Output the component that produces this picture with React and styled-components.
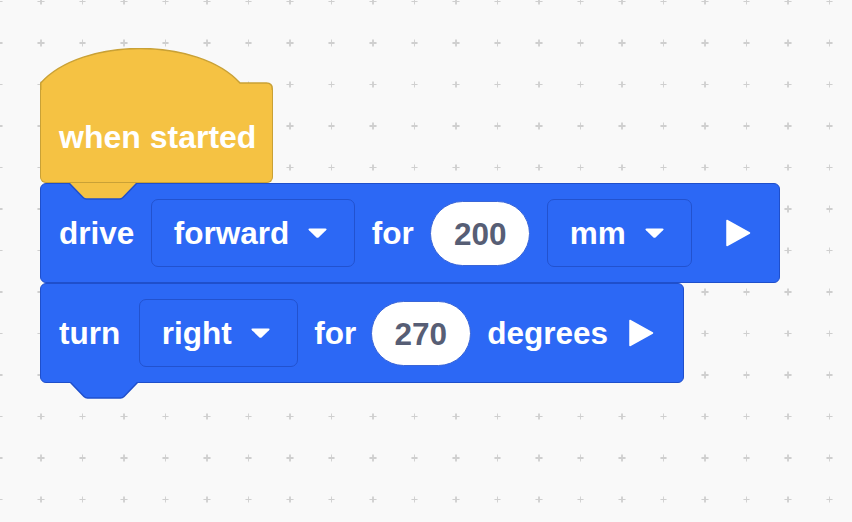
import styled, { createGlobalStyle } from 'styled-components';

const plus =
  "url(\"data:image/svg+xml,%3Csvg xmlns='http://www.w3.org/2000/svg' width='41.5' height='41.5'%3E%3Cpath d='M20.75 17.25v7M17.25 20.75h7' stroke='%23cfcfcf' stroke-width='1.8'/%3E%3C/svg%3E\")";

const GlobalStyle = createGlobalStyle`
  html, body {
    margin: 0;
    padding: 0;
  }
  body {
    background-color: #f9f9f9;
    background-image: ${plus};
    background-size: 41.5px 41.5px;
    background-position: 20.25px -19.25px;
    font-family: "Liberation Sans", Arial, sans-serif;
    min-height: 100vh;
  }
`;

const Canvas = styled.div`
  display: flex;
  flex-direction: column;
  align-items: flex-start;
  padding: 48px 0 0 40px;
`;

const Hat = styled.div`
  position: relative;
  display: flex;
  flex-direction: column;
  width: 233px;
`;

const HatCap = styled.svg`
  display: block;
`;

const HatBody = styled.div`
  height: 93px;
  box-sizing: border-box;
  background: #f5c243;
  border: 1.5px solid #c9a136;
  border-top: none;
  border-radius: 0 0 6px 6px;
  display: flex;
  align-items: center;
  padding: 2px 0 0 18px;
  color: #fff;
  font-size: 32px;
  font-weight: 700;
  white-space: nowrap;
`;

const Block = styled.div`
  position: relative;
  display: flex;
  align-items: center;
  gap: 16.5px;
  height: 100px;
  box-sizing: border-box;
  padding: 0 ${(p) => p.$padRight}px 0 18px;
  background: #2c68f5;
  border: 1.5px solid #1f4fcb;
  border-radius: 6px;
  color: #fff;
  font-size: 31.5px;
  font-weight: 700;
`;

const Label = styled.span`
  white-space: nowrap;
  line-height: 1;
  padding-top: 2px;
  margin-right: ${(p) => p.$mr || 0}px;
`;

const Dropdown = styled.div`
  display: flex;
  align-items: center;
  gap: 18px;
  height: 68px;
  box-sizing: border-box;
  padding: 0 26px 0 22px;
  border: 1.5px solid #2252cf;
  border-radius: 7px;
  white-space: nowrap;
`;

const Oval = styled.div`
  display: flex;
  align-items: center;
  justify-content: center;
  width: 100px;
  height: 65px;
  box-sizing: border-box;
  padding-top: 2px;
  border-radius: 33px;
  background: #fff;
  border: 1px solid #3a66d8;
  color: #575e75;
`;

const Play = styled.svg`
  display: block;
  flex: none;
  margin-left: ${(p) => p.$ml}px;
`;

const TabShape = styled.svg`
  position: absolute;
  left: 28.5px;
  top: 100%;
  z-index: 2;
  display: block;
`;

const Tab = ({ fill }) => (
  <TabShape width="68" height="17" viewBox="0 0 68 17">
    <path d="M0 0 L14 14.5 Q15.5 16 17.5 16 L50.5 16 Q52.5 16 54 14.5 L68 0 Z" fill={fill} />
    <path
      d="M0 0 L14 14.5 Q15.5 16 17.5 16 L50.5 16 Q52.5 16 54 14.5 L68 0"
      fill="none"
      stroke="#1f4fcb"
      strokeWidth="1.5"
    />
  </TabShape>
);

const Caret = () => (
  <svg width="21" height="12" viewBox="0 0 21 12">
    <path
      d="M2.5 1.5 H18.5 Q20.5 1.5 19 3.2 L11.8 10.2 Q10.5 11.4 9.2 10.2 L2 3.2 Q0.5 1.5 2.5 1.5 Z"
      fill="#fff"
    />
  </svg>
);

const PlayIcon = ({ ml }) => (
  <Play $ml={ml} width="26" height="28" viewBox="0 0 26 28">
    <path d="M2 1.5 L24.5 14 L2 26.5 Z" fill="#fff" stroke="#fff" strokeWidth="1.5" strokeLinejoin="round" />
  </Play>
);

const Select = ({ children }) => (
  <Dropdown>
    <Label>{children}</Label>
    <Caret />
  </Dropdown>
);

export default function App() {
  return (
    <>
      <GlobalStyle />
      <Canvas>
        <Hat>
          <HatCap width="233" height="42" viewBox="0 0 233 42">
            <path
              d="M0.75 42 L0.75 35 C42 -11 158 -11 200 35 L226.5 35 Q232.25 35 232.25 40.75 L232.25 42 Z"
              fill="#f5c243"
            />
            <path
              d="M0.75 42 L0.75 35 C42 -11 158 -11 200 35 L226.5 35 Q232.25 35 232.25 40.75 L232.25 42"
              fill="none"
              stroke="#c9a136"
              strokeWidth="1.5"
            />
          </HatCap>
          <HatBody>when started</HatBody>
          <Tab fill="#f5c243" />
        </Hat>
        <Block $padRight={28}>
          <Label>drive</Label>
          <Select>forward</Select>
          <Label>for</Label>
          <Oval>200</Oval>
          <Select>mm</Select>
          <PlayIcon ml={17} />
        </Block>
        <Block $padRight={29}>
          <Label $mr={2}>turn</Label>
          <Select>right</Select>
          <Label $mr={-2}>for</Label>
          <Oval>270</Oval>
          <Label>degrees</Label>
          <PlayIcon ml={3} />
          <Tab fill="#2c68f5" />
        </Block>
      </Canvas>
    </>
  );
}
